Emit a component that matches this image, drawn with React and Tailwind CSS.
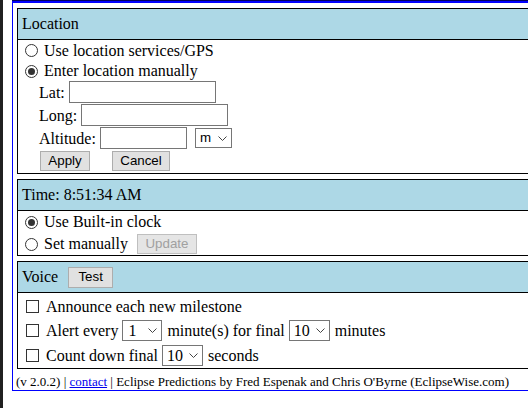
import React from "react";

const Radio = ({ checked }) => (
  <span className="w-[13px] h-[13px] rounded-full border border-[#333333] bg-white flex items-center justify-center shrink-0">
    {checked && <span className="w-[7px] h-[7px] rounded-full bg-[#333333]" />}
  </span>
);

const Checkbox = () => (
  <span className="w-[13px] h-[13px] border border-[#333333] bg-white shrink-0" />
);

const Chevron = () => (
  <svg width="9" height="5" viewBox="0 0 9 5" className="shrink-0">
    <polyline points="0.5,0.5 4.5,4.5 8.5,0.5" fill="none" stroke="#444444" strokeWidth="1" />
  </svg>
);

const Input = ({ className }) => (
  <span className={"block h-[22px] border border-[#767676] bg-white shrink-0 " + className} />
);

const Btn = ({ children, className }) => (
  <span
    className={
      "flex items-center justify-center h-[20px] border border-[#adadad] bg-[#e1e1e1] text-[13.33px] font-['Liberation_Sans',Arial,sans-serif] text-black shrink-0 " +
      className
    }
  >
    {children}
  </span>
);

const Header = ({ children }) => (
  <div className="h-[31px] border-b border-black bg-[#add8e6] flex items-center pl-[4px] text-[16px]">
    {children}
  </div>
);

export default function App() {
  return (
    <div className="w-[528px] h-[408px] overflow-hidden bg-white flex font-['Liberation_Serif','Times_New_Roman',serif] text-black text-[16px] leading-[18px]">
      <div className="w-[3px] h-full bg-[#202020] shrink-0" />
      <div className="ml-[9px] shrink-0 w-[600px] flex flex-col">
        <div className="h-[1px] bg-[#000060]" />
        <div className="border-t-2 border-l border-b border-[#0000ff] pl-[4px] pt-[5px]">
          {/* Location panel */}
          <div className="border border-black">
            <Header>Location</Header>
            <div className="flex flex-col pb-[1px]">
              <div className="h-[21px] flex items-center pl-[7px]">
                <Radio />
                <span className="ml-[6px]">Use location services/GPS</span>
              </div>
              <div className="h-[20px] flex items-center pl-[7px]">
                <Radio checked />
                <span className="ml-[6px]">Enter location manually</span>
              </div>
              <div className="h-[23px] flex items-start pl-[21px]">
                <span className="mt-[3px]">Lat:</span>
                <Input className="ml-[4px] w-[147px]" />
              </div>
              <div className="h-[23px] flex items-start pl-[21px]">
                <span className="mt-[3px]">Long:</span>
                <Input className="ml-[4px] w-[147px]" />
              </div>
              <div className="h-[23px] flex items-start pl-[21px]">
                <span className="mt-[3px]">Altitude:</span>
                <Input className="ml-[4px] w-[87px]" />
                <span className="ml-[8px] mt-[1px] h-[20px] w-[37px] border border-[#767676] bg-white flex items-center justify-between pl-[4px] pr-[4px] font-['Liberation_Sans',Arial,sans-serif] text-[13.33px]">
                  m
                  <Chevron />
                </span>
              </div>
              <div className="h-[22px] flex items-start pl-[22px] pt-[1px]">
                <Btn className="w-[50px]">Apply</Btn>
                <Btn className="ml-[22px] w-[58px]">Cancel</Btn>
              </div>
            </div>
          </div>

          {/* Time panel */}
          <div className="border border-black mt-[5px]">
            <Header>Time: 8:51:34 AM</Header>
            <div className="flex flex-col">
              <div className="h-[22px] flex items-center pl-[7px]">
                <Radio checked />
                <span className="ml-[6px]">Use Built-in clock</span>
              </div>
              <div className="h-[22px] flex items-center pl-[7px]">
                <Radio />
                <span className="ml-[6px]">Set manually</span>
                <span className="ml-[9px] w-[60px] h-[20px] flex items-center justify-center border border-[#bfbfbf] bg-[#e5e5e5] text-[#a0a0a0] text-[13.33px] font-['Liberation_Sans',Arial,sans-serif]">
                  Update
                </span>
              </div>
            </div>
          </div>

          {/* Voice panel */}
          <div className="border border-black mt-[5px]">
            <Header>
              <span>Voice</span>
              <Btn className="ml-[10px] w-[45px] h-[21px]">Test</Btn>
            </Header>
            <div className="flex flex-col pt-[2px]">
              <div className="h-[23px] flex items-center pl-[8px]">
                <Checkbox />
                <span className="ml-[7px]">Announce each new milestone</span>
              </div>
              <div className="h-[25px] flex items-center pl-[8px]">
                <Checkbox />
                <span className="ml-[7px]">Alert every</span>
                <span className="ml-[4px] h-[21px] w-[40px] border border-[#767676] bg-white flex items-center justify-between pl-[5px] pr-[4px]">
                  1
                  <Chevron />
                </span>
                <span className="ml-[5px]">minute(s) for final</span>
                <span className="ml-[4px] h-[21px] w-[41px] border border-[#767676] bg-white flex items-center justify-between pl-[4px] pr-[4px]">
                  10
                  <Chevron />
                </span>
                <span className="ml-[5px]">minutes</span>
              </div>
              <div className="h-[25px] flex items-center pl-[8px]">
                <Checkbox />
                <span className="ml-[7px]">Count down final</span>
                <span className="ml-[4px] h-[21px] w-[41px] border border-[#767676] bg-white flex items-center justify-between pl-[4px] pr-[4px]">
                  10
                  <Chevron />
                </span>
                <span className="ml-[5px]">seconds</span>
              </div>
            </div>
          </div>

          {/* Footer */}
          <div className="ml-[-1px] pt-[5px] text-[13px] leading-[16px] whitespace-nowrap">
            (v 2.0.2) |{" "}
            <a href="#" className="text-[#0000ee] underline">
              contact
            </a>{" "}
            | Eclipse Predictions by Fred Espenak and Chris O'Byrne (EclipseWise.com)
          </div>
        </div>
      </div>
    </div>
  );
}
